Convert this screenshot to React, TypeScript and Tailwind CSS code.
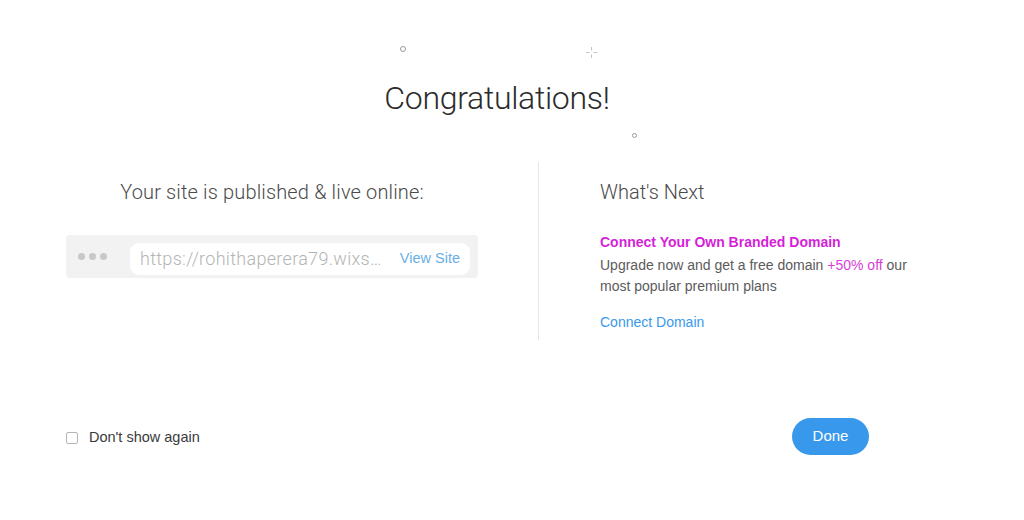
import React from "react";

export default function App() {
  return (
    <div
      className="relative w-[1024px] h-[520px] bg-white overflow-hidden"
      style={{ fontFamily: '"Liberation Sans", Arial, sans-serif' }}
    >
      {/* decorative confetti */}
      <span className="absolute left-[400px] top-[46px] w-[6px] h-[6px] rounded-full border border-[#9a9a9a]" />
      <span className="absolute left-[632px] top-[133px] w-[5px] h-[5px] rounded-full border border-[#9a9a9a]" />
      <svg className="absolute left-[586px] top-[47px]" width="11" height="11" viewBox="0 0 11 11">
        <path d="M5.5 0v3.5M5.5 7.5V11M0 5.5h3.5M7.5 5.5H11" stroke="#c4c4c4" strokeWidth="1" />
      </svg>

      <div className="flex flex-col">
        <div className="w-[994px] flex justify-center pt-[76px]">
          <h1
            className="text-[32px] leading-[44px] font-light text-[#2b2b2b] tracking-[-0.3px]"
            style={{ fontFamily: 'Roboto, "Liberation Sans", sans-serif' }}
          >
            Congratulations!
          </h1>
        </div>

        <div className="flex mt-[42px] h-[178px]">
          <div className="w-[539px] pl-[66px] pr-[60px] border-r border-[#e6e6e6] flex flex-col">
            <div
              className="w-[412px] text-center text-[20px] leading-[24px] font-light text-[#4a4a4a] mt-[18px] tracking-[0.15px]"
              style={{ fontFamily: 'Roboto, "Liberation Sans", sans-serif' }}
            >
              Your site is published &amp; live online:
            </div>
            <div className="mt-[31px] w-[412px] h-[43px] bg-[#f2f2f2] rounded-[4px] flex items-center pl-[12px] pr-[8px]">
              <div className="flex gap-[4px] w-[52px]">
                <span className="w-[7px] h-[7px] rounded-full bg-[#c8c8c8]" />
                <span className="w-[7px] h-[7px] rounded-full bg-[#c8c8c8]" />
                <span className="w-[7px] h-[7px] rounded-full bg-[#c8c8c8]" />
              </div>
              <div className="flex-1 h-[32px] bg-white rounded-[9px] flex items-center pl-[10px] pr-[10px] mt-[4px]">
                <span
                  className="flex-1 text-[18px] text-[#b4b4b4] whitespace-nowrap overflow-hidden tracking-[0.3px]"
                  style={{ fontFamily: 'Roboto, "Liberation Sans", sans-serif', fontWeight: 300 }}
                >
                  https://rohithaperera79.wixs…
                </span>
                <span className="ml-[8px] text-[14.5px] text-[#6aaee6]">View Site</span>
              </div>
            </div>
          </div>

          <div className="pl-[61px] flex flex-col">
            <div
              className="text-[20px] leading-[24px] font-light text-[#4a4a4a] mt-[18px]"
              style={{ fontFamily: 'Roboto, "Liberation Sans", sans-serif' }}
            >
              What's Next
            </div>
            <div className="mt-[30px] text-[14px] leading-[16px] font-bold text-[#d51fd8]">
              Connect Your Own Branded Domain
            </div>
            <div className="mt-[5px] text-[14px] leading-[21px] text-[#5b5b5b] w-[320px]">
              Upgrade now and get a free domain <span className="text-[#d640d8]">+50% off</span> our most popular premium plans
            </div>
            <div className="mt-[17px] text-[14px] leading-[16px] text-[#3899ec]">Connect Domain</div>
          </div>
        </div>

        <div className="flex items-center mt-[78px] h-[37px]">
          <div className="pl-[66px] flex items-center w-[792px] pt-[2px]">
            <span className="w-[12px] h-[12px] border border-[#b5b5b5] rounded-[2px] bg-white" />
            <span className="ml-[11px] text-[14.5px] text-[#3a3a3a]">Don't show again</span>
          </div>
          <button className="w-[77px] h-[37px] rounded-full bg-[#3899ec] text-white text-[15px] flex items-center justify-center">
            Done
          </button>
        </div>
      </div>
    </div>
  );
}
